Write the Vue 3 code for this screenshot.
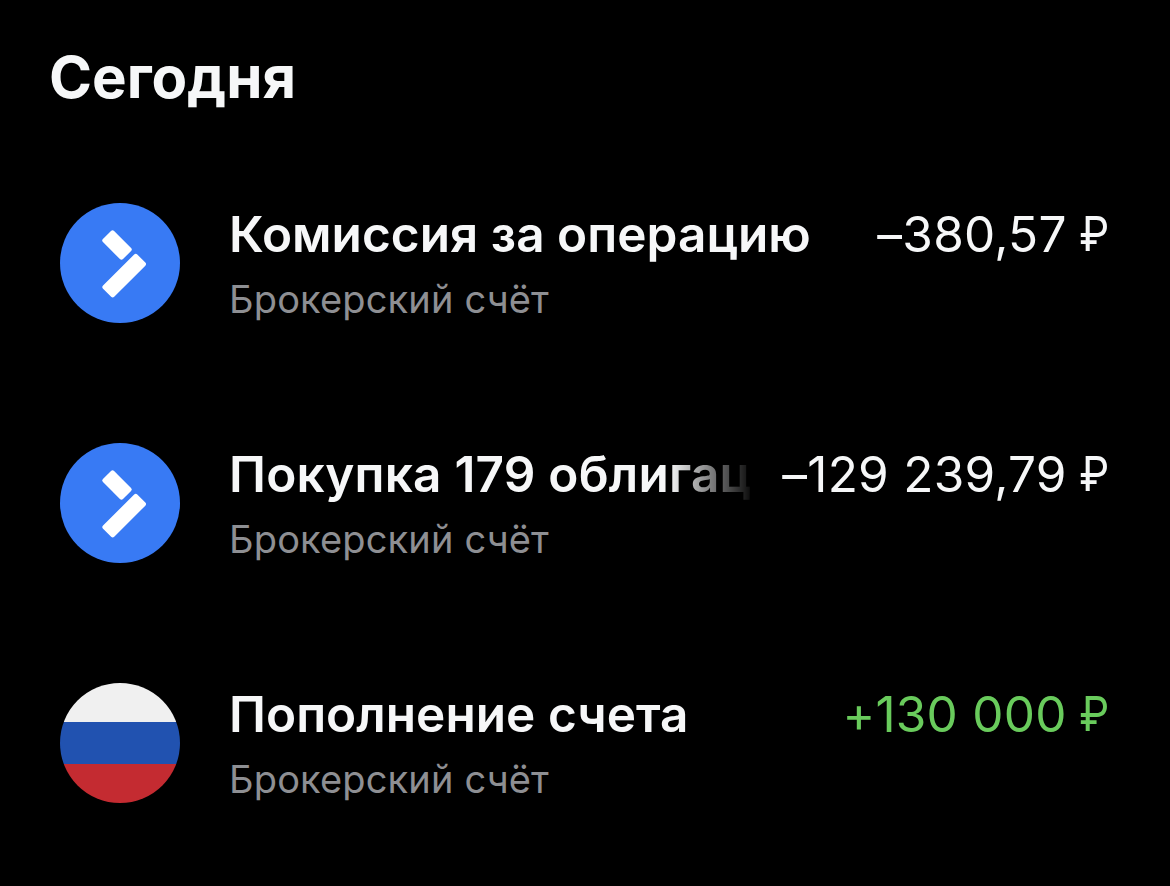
<template>
  <main class="operations">
    <h1 class="day-title">Сегодня</h1>

    <ul class="operation-list">
      <li v-for="item in operations" :key="item.id" class="operation">
        <!-- Round icon: broker logo or currency flag -->
        <svg
          v-if="item.icon === 'broker'"
          class="operation-icon"
          viewBox="0 0 120 120"
          aria-hidden="true"
        >
          <circle cx="60" cy="60" r="60" fill="#387af4" />
          <g fill="#ffffff">
            <rect
              x="-14.2"
              y="-7.9"
              width="28.4"
              height="15.8"
              rx="2.2"
              transform="translate(57 42) rotate(45)"
            />
            <rect
              x="-24.2"
              y="-7.9"
              width="48.4"
              height="15.8"
              rx="2.2"
              transform="translate(64.2 72.6) rotate(-45)"
            />
          </g>
        </svg>
        <div v-else class="operation-icon flag">
          <span class="stripe-white"></span>
          <span class="stripe-blue"></span>
          <span class="stripe-red"></span>
        </div>

        <div class="operation-info">
          <p :class="['operation-name', { faded: item.faded }]">
            {{ item.name }}
          </p>
          <p class="operation-account">Брокерский счёт</p>
        </div>

        <p :class="['operation-amount', { income: item.income }]">
          <span class="value">{{ item.amount }}</span>
          <span class="currency">₽</span>
        </p>
      </li>
    </ul>
  </main>
</template>

<script setup>
const operations = [
  {
    id: 1,
    icon: "broker",
    name: "Комиссия за операцию",
    amount: "–380,57",
  },
  {
    id: 2,
    icon: "broker",
    name: "Покупка 179 облигац",
    amount: "–129 239,79",
    faded: true,
  },
  {
    id: 3,
    icon: "flag",
    name: "Пополнение счета",
    amount: "+130 000",
    income: true,
  },
];
</script>

<style>
body {
  background: #000000;
}
</style>

<style scoped>
.operations {
  box-sizing: border-box;
  height: 886px;
  padding: 42px 61px 0 49px;
  overflow: hidden;
  background: #000000;
  color: #f6f7f8;
  font-family: Inter, "Liberation Sans", sans-serif;
}

.day-title {
  margin: 0;
  font-size: 58.2px;
  font-weight: 700;
  line-height: 70px;
}

.operation-list {
  display: flex;
  flex-direction: column;
  gap: 120px;
  margin: 91px 0 0;
  padding: 0 0 0 11px;
  list-style: none;
}

.operation {
  display: flex;
  align-items: flex-start;
  height: 120px;
}

.operation-icon {
  display: block;
  flex: none;
  width: 120px;
  height: 120px;
}

.flag {
  display: flex;
  flex-direction: column;
  overflow: hidden;
  border-radius: 50%;
}

.stripe-white {
  height: 39px;
  background: #f0f0f0;
}

.stripe-blue {
  height: 42px;
  background: #2152b0;
}

.stripe-red {
  height: 39px;
  background: #c42b31;
}

.operation-info {
  flex: 1;
  min-width: 0;
  margin-left: 49px;
  padding-top: 1px;
}

.operation-name,
.operation-account,
.operation-amount {
  margin: 0;
  white-space: nowrap;
}

.operation-name {
  font-size: 49.5px;
  font-weight: 600;
  line-height: 60px;
  letter-spacing: 0.04px;
}

/* Long names dissolve before the amount */
.faded {
  letter-spacing: 0.22px;
  mask-image: linear-gradient(to left, transparent 0, #000 86px);
}

.operation-account {
  margin-top: 10px;
  color: #8e8f93;
  font-size: 38px;
  line-height: 50px;
  letter-spacing: 0.16px;
}

.operation-amount {
  display: flex;
  flex: none;
  margin-left: 27px;
  padding-top: 1px;
  font-size: 49.5px;
  line-height: 60px;
}

.value {
  letter-spacing: 0.25px;
}

/* The ruble sign is a little lower and narrower than the digits */
.currency {
  margin-left: 9px;
  font-size: 47.5px;
  transform: scaleX(0.9);
  transform-origin: right;
}

.income {
  color: #69cb5c;
}
</style>
